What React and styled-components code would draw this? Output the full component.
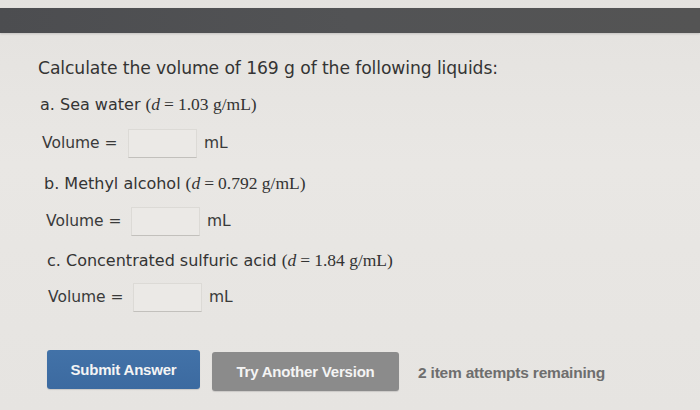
import React from "react";
import styled, { createGlobalStyle } from "styled-components";

const Global = createGlobalStyle`
  html, body { margin: 0; padding: 0; }
  body {
    width: 700px; height: 410px; overflow: hidden;
    background: linear-gradient(180deg, #e4e2df 0%, #e9e7e4 40%, #e6e4e1 100%);
    font-family: "DejaVu Sans", Verdana, sans-serif;
    color: #343434;
  }
`;

const Page = styled.div`
  display: flex;
  flex-direction: column;
  width: 700px;
  height: 410px;
  padding-top: 8px;
  box-sizing: border-box;
`;

const TopBar = styled.div`
  height: 25px;
  background: linear-gradient(90deg, #4c4d50, #525355 50%, #545454);
  box-shadow: 0 1px 2px rgba(0,0,0,0.15);
`;

const Content = styled.div`
  display: flex;
  flex-direction: column;
  padding: 24px 0 0 0;
`;

const Title = styled.div`
  padding-left: ${p => p.$indent}px;
  font-size: 17.2px;
  line-height: 22px;
  height: 22px;
  letter-spacing: -0.1px;
`;

const Item = styled.div`
  padding-left: ${p => p.$indent}px;
  margin-top: ${p => p.$top}px;
  font-size: 16px;
  line-height: 22px;
  height: 22px;
  display: flex;
  align-items: baseline;
  white-space: pre;
`;

const Math = styled.span`
  font-family: "Liberation Serif", "Times New Roman", serif;
  font-size: 17.5px;
  margin-left: 5px;
  color: #333;
`;

const Var = styled.i`
  font-style: italic;
`;

const Eq = styled.span`
  margin: 0 4px;
`;

const AnswerRow = styled.div`
  display: flex;
  align-items: center;
  padding-left: ${p => p.$indent}px;
  margin-top: ${p => p.$top}px;
  height: 30px;
  font-size: 15.5px;
  color: #3a3a3a;
`;

const Label = styled.span`
  width: ${p => p.$w}px;
`;

const Field = styled.div`
  width: 69px;
  height: 29px;
  border: 1px solid #dcdad6;
  border-bottom: 1px solid #c2c0bc;
  background: #ebe9e6;
  box-sizing: border-box;
`;

const Unit = styled.span`
  margin-left: 7px;
`;

const Actions = styled.div`
  display: flex;
  align-items: center;
  margin-top: 36px;
  padding-left: 47px;
  font-family: "Liberation Sans", Arial, sans-serif;
  font-weight: bold;
`;

const Button = styled.div`
  display: flex;
  align-items: center;
  justify-content: center;
  width: ${p => p.$w}px;
  height: 39px;
  margin-top: ${p => p.$dy}px;
  margin-right: ${p => p.$gap}px;
  border-radius: 3px;
  background: ${p => p.$bg};
  color: #f4f4f4;
  font-size: 15px;
  letter-spacing: -0.2px;
  box-shadow: 0 1px 1px rgba(0,0,0,0.12);
`;

const Remaining = styled.span`
  margin-top: 6px;
  color: #6e6e6e;
  font-size: 15.5px;
  letter-spacing: -0.2px;
`;

export default function App() {
  return (
    <>
      <Global />
      <Page>
        <TopBar />
        <Content>
          <Title $indent={38}>Calculate the volume of 169 g of the following liquids:</Title>
          <Item $indent={40} $top={14}>
            a. Sea water
            <Math>(<Var>d</Var><Eq>=</Eq>1.03 g/mL)</Math>
          </Item>
          <AnswerRow $indent={42} $top={13}>
            <Label $w={86}>Volume =</Label>
            <Field />
            <Unit>mL</Unit>
          </AnswerRow>
          <Item $indent={44} $top={14}>
            b. Methyl alcohol
            <Math>(<Var>d</Var><Eq>=</Eq>0.792 g/mL)</Math>
          </Item>
          <AnswerRow $indent={46} $top={12}>
            <Label $w={85}>Volume =</Label>
            <Field />
            <Unit>mL</Unit>
          </AnswerRow>
          <Item $indent={47} $top={13}>
            c. Concentrated sulfuric acid
            <Math>(<Var>d</Var><Eq>=</Eq>1.84 g/mL)</Math>
          </Item>
          <AnswerRow $indent={48} $top={11}>
            <Label $w={85}>Volume =</Label>
            <Field />
            <Unit>mL</Unit>
          </AnswerRow>
        </Content>
        <Actions>
          <Button $w={153} $bg="linear-gradient(180deg,#4272a8,#3c6aa0)" $dy={0} $gap={12}>Submit Answer</Button>
          <Button $w={187} $bg="#8b8b8b" $dy={4} $gap={19}>Try Another Version</Button>
          <Remaining>2 item attempts remaining</Remaining>
        </Actions>
      </Page>
    </>
  );
}
